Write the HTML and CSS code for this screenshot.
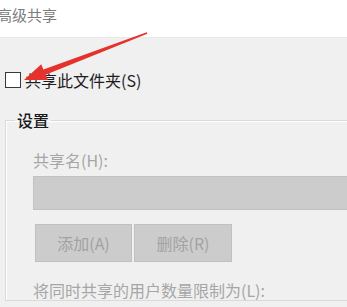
FILE: index.html
```html
<!DOCTYPE html>
<html lang="zh-CN">
<head>
<meta charset="utf-8">
<link rel="stylesheet" href="styles.css">
</head>
<body>
<div class="title"><span class="title-text">高级共享</span></div>
<div class="content">
  <label class="check-row"><span class="checkbox"></span><span class="check-label">共享此文件夹(S)</span></label>
  <fieldset class="group">
    <legend class="legend">设置</legend>
    <div class="field-label">共享名(H):</div>
    <div class="input"></div>
    <div class="buttons">
      <div class="btn">添加(A)</div>
      <div class="btn btn-wide">删除(R)</div>
    </div>
    <div class="limit-label">将同时共享的用户数量限制为(L):</div>
  </fieldset>
</div>
<svg class="arrow" width="347" height="307" viewBox="0 0 347 307">
  <polygon points="24,80 41.2,64.2 43.4,69.5 146.7,32.2 147.3,33.8 45.6,74.7 48,80" fill="#e5322d"/>
</svg>
</body>
</html>
```

FILE: styles.css
```css
html, body {
  margin: 0;
  padding: 0;
  width: 347px;
  height: 307px;
  overflow: hidden;
  background: #f0f0f0;
  font-family: "Noto Sans CJK SC", "Microsoft YaHei", sans-serif;
  font-size: 16px;
  position: relative;
}
.title {
  height: 37px;
  background: #ffffff;
  border-bottom: 1px solid #e8e8e8;
  display: flex;
  align-items: center;
}
.title-text {
  margin-left: -3px;
  margin-top: -8px;
  color: #7c7c7c;
  font-size: 15px;
  line-height: 20px;
}
.content {
  padding-top: 32px;
}
.check-row {
  display: flex;
  align-items: center;
  height: 20px;
  margin-left: 5px;
  gap: 4px;
}
.checkbox {
  width: 14px;
  height: 14px;
  border: 1.5px solid #3a3a3a;
  background: #ffffff;
}
.check-label {
  color: #1e1e1e;
  line-height: 20px;
}
.group {
  margin: 20px 0 0 5px;
  padding: 20px 0 0 27px;
  width: 360px;
  border: 1px solid #dadada;
  box-shadow: inset 1px 1px 0 #ffffff;
}
.legend {
  margin-left: -18px;
  padding: 0 2px;
  line-height: 20px;
  color: #1a1a1a;
  font-weight: 500;
}
.field-label {
  color: #a6a6a6;
  line-height: 20px;
}
.input {
  margin-top: 6px;
  height: 32px;
  background: #cccccc;
  border: 1px solid #c2c2c2;
}
.buttons {
  display: flex;
  gap: 2px;
  margin: 14px 0 0 2px;
}
.btn {
  width: 95px;
  height: 36px;
  background: #cccccc;
  border: 1px solid #c0c0c0;
  color: #a2a2a2;
  display: flex;
  align-items: center;
  justify-content: center;
}
.btn-wide {
  width: 96px;
}
.limit-label {
  margin-top: 18px;
  color: #a6a6a6;
  line-height: 20px;
}
.arrow {
  position: absolute;
  left: 0;
  top: 0;
  pointer-events: none;
}
```
